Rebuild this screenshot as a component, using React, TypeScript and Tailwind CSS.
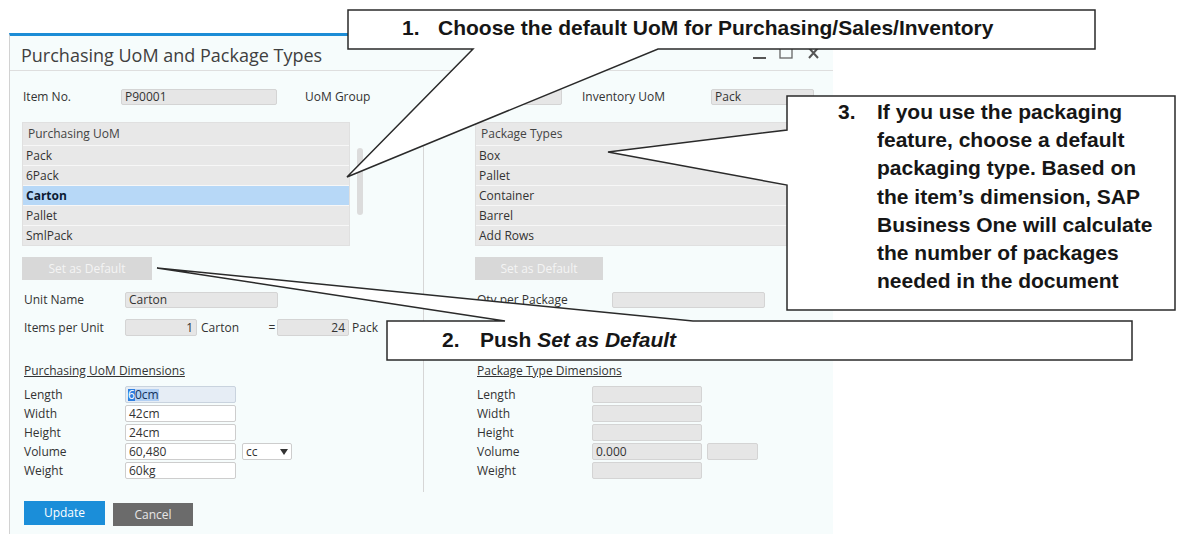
import React from 'react';

const calloutText = "font-['Liberation_Sans',Arial,sans-serif] font-bold text-[21px] leading-[24px] text-[#161616] whitespace-nowrap";

const Field = ({
  className = '',
  children,
  white = false,
  right = false,
}: {
  className?: string;
  children?: React.ReactNode;
  white?: boolean;
  right?: boolean;
}) => (
  <div
    className={`shrink-0 h-[16px] flex items-center px-[3px] rounded-[2px] border text-[12px] leading-none text-[#333] ${
      white ? 'bg-white border-[#cdcdcd]' : 'bg-[#e6e6e6] border-[#d4d4d4]'
    } ${right ? 'justify-end' : ''} ${className}`}
  >
    {children}
  </div>
);

const List = ({ title, items, selected, className = '' }: { title: string; items: string[]; selected?: string; className?: string }) => (
  <div className={`shrink-0 flex flex-col border border-[#e0e0e0] bg-[#e8e8e8] ${className}`}>
    <div className="h-[22px] flex items-center px-[5px] text-[12px] text-[#444]">{title}</div>
    {items.map((it) => (
      <div
        key={it}
        className={`h-[20px] flex items-center px-[3px] border-t border-[#f7f7f7] text-[12px] ${
          it === selected ? 'bg-[#b7d8f7] font-bold text-[#0c1b33]' : 'text-[#333]'
        }`}
      >
        {it}
      </div>
    ))}
  </div>
);

const DisabledButton = ({ className = '' }: { className?: string }) => (
  <div className={`mt-[11px] h-[23px] bg-[#d8d8d8] text-[#f4f4f4] text-[12px] flex items-center justify-center ${className}`}>
    Set as Default
  </div>
);

export default function App() {
  const dims = ['Length', 'Width', 'Height', 'Volume', 'Weight'];

  return (
    <div className="relative w-[1177px] h-[534px] bg-white overflow-hidden pt-[33px] pl-[9px] font-['Open_Sans','Noto_Sans',sans-serif]">
      {/* window */}
      <div className="w-[824px] h-[510px] bg-[#f6fcfc] border-l border-l-[#d2d2d2] border-t-[3px] border-t-[#1c8dd6] flex flex-col">
        {/* title bar */}
        <div className="h-[35px] shrink-0 flex items-center justify-between pl-[11px] pr-[8px] pt-[4px] border-b border-[#dedede]">
          <span className="text-[18px] text-[#404040]">Purchasing UoM and Package Types</span>
          <svg width="72" height="16" viewBox="0 0 72 16" className="mb-[4px]">
            <rect x="0" y="12" width="13" height="2" fill="#555" />
            <rect x="27" y="3" width="12" height="10" fill="none" stroke="#666" strokeWidth="1.3" />
            <path d="M56 3 L65 13 M65 3 L56 13" stroke="#555" strokeWidth="2" />
          </svg>
        </div>

        {/* top row */}
        <div className="mt-[18px] h-[16px] flex items-center pl-[13px] text-[12px] text-[#333]">
          <div className="w-[98px] shrink-0">Item No.</div>
          <Field className="w-[156px]">P90001</Field>
          <div className="ml-[28px] w-[134px] shrink-0">UoM Group</div>
          <Field className="w-[123px]" />
          <div className="ml-[20px] w-[129px] shrink-0">Inventory UoM</div>
          <Field className="w-[103px]">Pack</Field>
        </div>

        {/* two columns */}
        <div className="mt-[17px] flex pl-[12px]">
          {/* left column */}
          <div className="w-[341px] shrink-0 flex flex-col text-[12px] text-[#333]">
            <div className="flex">
              <List
                className="w-[328px]"
                title="Purchasing UoM"
                items={['Pack', '6Pack', 'Carton', 'Pallet', 'SmlPack']}
                selected="Carton"
              />
              <div className="shrink-0 ml-[7px] mt-[26px] w-[6px] h-[67px] rounded-full bg-[#dcdcdc]" />
            </div>
            <DisabledButton className="w-[130px]" />

            <div className="mt-[12px] h-[16px] flex items-center">
              <div className="w-[103px] shrink-0 pl-[2px]">Unit Name</div>
              <Field className="w-[153px]">Carton</Field>
            </div>
            <div className="mt-[11px] h-[17px] flex items-center whitespace-nowrap">
              <div className="w-[103px] shrink-0 pl-[2px]">Items per Unit</div>
              <Field className="w-[72px] h-[17px]" right>
                1
              </Field>
              <span className="w-[70px] shrink-0 pl-[4px]">Carton</span>
              <span className="w-[10px] shrink-0 text-center">=</span>
              <Field className="w-[72px] h-[17px]" right>
                24
              </Field>
              <span className="shrink-0 pl-[3px]">Pack</span>
            </div>

            <div className="mt-[27px] h-[16px] pl-[2px] flex items-center underline">Purchasing UoM Dimensions</div>
            <div className="mt-[7px] flex flex-col gap-[2px]">
              {dims.map((d) => (
                <div key={d} className="h-[17px] flex items-center">
                  <div className="w-[103px] shrink-0 pl-[2px]">{d}</div>
                  {d === 'Length' ? (
                    <div className="shrink-0 w-[111px] h-[17px] flex items-center px-[2px] rounded-[2px] border border-[#c9d3de] bg-[#e6edf5] text-[12px] leading-none">
                      <span className="bg-[#2f7fe0] text-white">6</span>
                      <span className="bg-[#b3d0f3] text-[#12305c]">0cm</span>
                    </div>
                  ) : (
                    <Field className="w-[111px] h-[17px]" white>
                      {d === 'Width' ? '42cm' : d === 'Height' ? '24cm' : d === 'Volume' ? '60,480' : '60kg'}
                    </Field>
                  )}
                  {d === 'Volume' && (
                    <div className="shrink-0 ml-[6px] w-[50px] h-[17px] flex items-center justify-between px-[3px] rounded-[2px] border border-[#cdcdcd] bg-white text-[12px] leading-none">
                      <span>cc</span>
                      <svg width="8" height="6" viewBox="0 0 8 6">
                        <path d="M0 0 H8 L4 6 Z" fill="#333" />
                      </svg>
                    </div>
                  )}
                </div>
              ))}
            </div>

            <div className="mt-[22px] flex items-start gap-[8px] pl-[2px]">
              <div className="w-[81px] h-[24px] bg-[#1b8ed9] text-white text-[12px] flex items-center justify-center">Update</div>
              <div className="w-[80px] h-[23px] mt-[2px] bg-[#6b6b6b] text-[#e6e6e6] text-[12px] flex items-center justify-center">
                Cancel
              </div>
            </div>
          </div>

          {/* divider */}
          <div className="shrink-0 ml-[60px] w-[1px] h-[370px] bg-[#d6d6d6]" />

          {/* right column */}
          <div className="ml-[51px] w-[340px] shrink-0 flex flex-col text-[12px] text-[#333]">
            <List className="w-[330px]" title="Package Types" items={['Box', 'Pallet', 'Container', 'Barrel', 'Add Rows']} />
            <DisabledButton className="w-[128px]" />

            <div className="mt-[12px] h-[16px] flex items-center">
              <div className="w-[137px] shrink-0 pl-[2px]">Qty per Package</div>
              <Field className="w-[153px]" />
            </div>
            <div className="mt-[11px] h-[17px]" />

            <div className="mt-[27px] h-[16px] pl-[2px] flex items-center underline">Package Type Dimensions</div>
            <div className="mt-[7px] flex flex-col gap-[2px]">
              {dims.map((d) => (
                <div key={d} className="h-[17px] flex items-center">
                  <div className="w-[117px] shrink-0 pl-[2px]">{d}</div>
                  <Field className="w-[110px] h-[17px]">{d === 'Volume' ? '0.000' : ''}</Field>
                  {d === 'Volume' && <Field className="ml-[5px] w-[51px] h-[17px]" />}
                </div>
              ))}
            </div>
          </div>
        </div>
      </div>

      {/* callouts */}
      <svg className="absolute left-0 top-0 pointer-events-none" width="1177" height="534" viewBox="0 0 1177 534">
        <polygon
          points="348,10 1095,10 1095,49 658,49 347,177 473,49 348,49"
          fill="white"
          stroke="#2a2a2a"
          strokeWidth="1.5"
        />
        <polygon
          points="787,96 1175,96 1175,310 787,310 787,185 608,152 787,130"
          fill="white"
          stroke="#2a2a2a"
          strokeWidth="1.5"
        />
        <polygon
          points="387,321 505,321 157,268 693,321 1132,321 1132,360 387,360"
          fill="white"
          stroke="#2a2a2a"
          strokeWidth="1.5"
        />
      </svg>

      <div className={`absolute left-[402px] top-[16px] flex ${calloutText}`}>
        <span className="w-[36px]">1.</span>
        <span>Choose the default UoM for Purchasing/Sales/Inventory</span>
      </div>

      <div className={`absolute left-[442px] top-[328px] flex ${calloutText}`}>
        <span className="w-[38px]">2.</span>
        <span>
          Push <i>Set as Default</i>
        </span>
      </div>

      <div className={`absolute left-[838px] top-[98px] flex ${calloutText} leading-[28.2px]`}>
        <span className="w-[39px]">3.</span>
        <div className="flex flex-col">
          <span>If you use the packaging</span>
          <span>feature, choose a default</span>
          <span>packaging type. Based on</span>
          <span>the item’s dimension, SAP</span>
          <span>Business One will calculate</span>
          <span>the number of packages</span>
          <span>needed in the document</span>
        </div>
      </div>
    </div>
  );
}
